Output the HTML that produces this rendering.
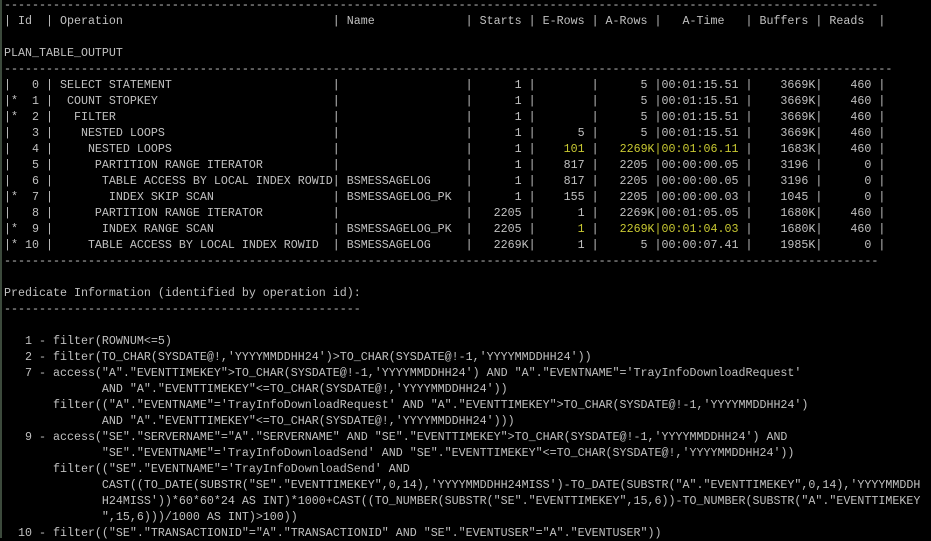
<!DOCTYPE html>
<html><head><meta charset="utf-8"><style>
html,body{margin:0;padding:0;background:#000;width:931px;height:541px;overflow:hidden}
body{border-left:2px solid #3c4a3c;box-sizing:border-box}
pre{margin:-3px 0 0 2px;font-family:"Liberation Mono",monospace;font-size:11.67px;line-height:16px;color:#c0c0c0;white-space:pre}
.y{color:#c8c832}
</style></head><body><pre>-----------------------------------------------------------------------------------------------------------------------------
| Id  | Operation                              | Name             | Starts | E-Rows | A-Rows |   A-Time   | Buffers | Reads  |

PLAN_TABLE_OUTPUT
-------------------------------------------------------------------------------------------------------------------------------
|   0 | SELECT STATEMENT                       |                  |      1 |        |      5 |00:01:15.51 |    3669K|    460 |
|*  1 |  COUNT STOPKEY                         |                  |      1 |        |      5 |00:01:15.51 |    3669K|    460 |
|*  2 |   FILTER                               |                  |      1 |        |      5 |00:01:15.51 |    3669K|    460 |
|   3 |    NESTED LOOPS                        |                  |      1 |      5 |      5 |00:01:15.51 |    3669K|    460 |
|   4 |     NESTED LOOPS                       |                  |      1 |    <span class="y">101</span> |   <span class="y">2269K|00:01:06.11</span> |    1683K|    460 |
|   5 |      PARTITION RANGE ITERATOR          |                  |      1 |    817 |   2205 |00:00:00.05 |    3196 |      0 |
|   6 |       TABLE ACCESS BY LOCAL INDEX ROWID| BSMESSAGELOG     |      1 |    817 |   2205 |00:00:00.05 |    3196 |      0 |
|*  7 |        INDEX SKIP SCAN                 | BSMESSAGELOG_PK  |      1 |    155 |   2205 |00:00:00.03 |    1045 |      0 |
|   8 |      PARTITION RANGE ITERATOR          |                  |   2205 |      1 |   2269K|00:01:05.05 |    1680K|    460 |
|*  9 |       INDEX RANGE SCAN                 | BSMESSAGELOG_PK  |   2205 |      <span class="y">1</span> |   <span class="y">2269K|00:01:04.03</span> |    1680K|    460 |
|* 10 |     TABLE ACCESS BY LOCAL INDEX ROWID  | BSMESSAGELOG     |   2269K|      1 |      5 |00:00:07.41 |    1985K|      0 |
-----------------------------------------------------------------------------------------------------------------------------

Predicate Information (identified by operation id):
---------------------------------------------------

   1 - filter(ROWNUM&lt;=5)
   2 - filter(TO_CHAR(SYSDATE@!,'YYYYMMDDHH24')&gt;TO_CHAR(SYSDATE@!-1,'YYYYMMDDHH24'))
   7 - access("A"."EVENTTIMEKEY"&gt;TO_CHAR(SYSDATE@!-1,'YYYYMMDDHH24') AND "A"."EVENTNAME"='TrayInfoDownloadRequest'
              AND "A"."EVENTTIMEKEY"&lt;=TO_CHAR(SYSDATE@!,'YYYYMMDDHH24'))
       filter(("A"."EVENTNAME"='TrayInfoDownloadRequest' AND "A"."EVENTTIMEKEY"&gt;TO_CHAR(SYSDATE@!-1,'YYYYMMDDHH24')
              AND "A"."EVENTTIMEKEY"&lt;=TO_CHAR(SYSDATE@!,'YYYYMMDDHH24')))
   9 - access("SE"."SERVERNAME"="A"."SERVERNAME" AND "SE"."EVENTTIMEKEY"&gt;TO_CHAR(SYSDATE@!-1,'YYYYMMDDHH24') AND
              "SE"."EVENTNAME"='TrayInfoDownloadSend' AND "SE"."EVENTTIMEKEY"&lt;=TO_CHAR(SYSDATE@!,'YYYYMMDDHH24'))
       filter(("SE"."EVENTNAME"='TrayInfoDownloadSend' AND
              CAST((TO_DATE(SUBSTR("SE"."EVENTTIMEKEY",0,14),'YYYYMMDDHH24MISS')-TO_DATE(SUBSTR("A"."EVENTTIMEKEY",0,14),'YYYYMMDDH
              H24MISS'))*60*60*24 AS INT)*1000+CAST((TO_NUMBER(SUBSTR("SE"."EVENTTIMEKEY",15,6))-TO_NUMBER(SUBSTR("A"."EVENTTIMEKEY
              ",15,6)))/1000 AS INT)&gt;100))
  10 - filter(("SE"."TRANSACTIONID"="A"."TRANSACTIONID" AND "SE"."EVENTUSER"="A"."EVENTUSER"))
</pre></body></html>
